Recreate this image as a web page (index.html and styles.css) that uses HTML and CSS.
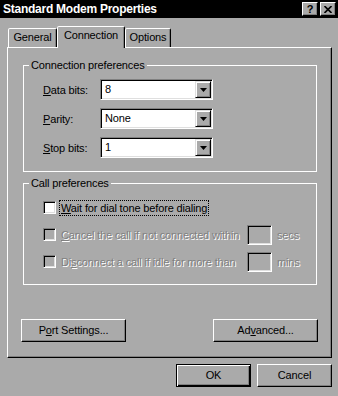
FILE: index.html
```html
<!DOCTYPE html>
<html>
<head>
<meta charset="utf-8">
<title>Standard Modem Properties</title>
<link rel="stylesheet" href="styles.css">
</head>
<body>
<div class="window">
  <div class="titlebar">
    <span class="title">Standard Modem Properties</span>
    <div class="title-buttons">
      <span class="tbtn help">?</span>
      <span class="tbtn close"><svg width="8" height="7" viewBox="0 0 8 7"><path d="M0.5 0 L7.5 7 M7.5 0 L0.5 7" stroke="#000" stroke-width="1.6" fill="none"/></svg></span>
    </div>
  </div>
  <div class="tabs">
    <div class="tab tab-general">General</div>
    <div class="tab tab-connection active">Connection</div>
    <div class="tab tab-options">Options</div>
  </div>
  <div class="panel">
    <fieldset class="group group-conn">
      <legend>Connection preferences</legend>
      <div class="group-body">
        <div class="field-row">
          <span class="field-label"><u>D</u>ata bits:</span>
          <div class="combo"><span class="combo-value">8</span><span class="combo-btn"><svg width="7" height="4" viewBox="0 0 7 4"><path d="M0 0H7L3.5 4Z" fill="#000"/></svg></span></div>
        </div>
        <div class="field-row">
          <span class="field-label"><u>P</u>arity:</span>
          <div class="combo"><span class="combo-value">None</span><span class="combo-btn"><svg width="7" height="4" viewBox="0 0 7 4"><path d="M0 0H7L3.5 4Z" fill="#000"/></svg></span></div>
        </div>
        <div class="field-row">
          <span class="field-label"><u>S</u>top bits:</span>
          <div class="combo"><span class="combo-value">1</span><span class="combo-btn"><svg width="7" height="4" viewBox="0 0 7 4"><path d="M0 0H7L3.5 4Z" fill="#000"/></svg></span></div>
        </div>
      </div>
    </fieldset>
    <fieldset class="group group-call">
      <legend>Call preferences</legend>
      <div class="group-body">
        <div class="check-row">
          <span class="checkbox"></span>
          <span class="check-label focused"><u>W</u>ait for dial tone before dialing</span>
        </div>
        <div class="check-row disabled">
          <span class="checkbox"></span>
          <span class="check-label wide"><u>C</u>ancel the call if not connected within</span>
          <span class="edit"></span>
          <span class="unit">secs</span>
        </div>
        <div class="check-row disabled">
          <span class="checkbox"></span>
          <span class="check-label wide">Di<u>s</u>connect a call if idle for more than</span>
          <span class="edit"></span>
          <span class="unit">mins</span>
        </div>
      </div>
    </fieldset>
    <div class="panel-buttons">
      <button class="btn wide-btn">P<u>o</u>rt Settings...</button>
      <button class="btn wide-btn">Ad<u>v</u>anced...</button>
    </div>
  </div>
  <div class="footer">
    <button class="btn default">OK</button>
    <button class="btn">Cancel</button>
  </div>
</div>
</body>
</html>
```
FILE: styles.css
```css
* { box-sizing: border-box; }
html, body { margin: 0; padding: 0; }
body {
  background: #aaaaaa;
  font-family: "Liberation Sans", Arial, sans-serif;
  font-size: 11px;
  letter-spacing: -0.15px;
  color: #000;
}
.window {
  width: 338px;
  height: 396px;
  background: #aaaaaa;
  display: flex;
  flex-direction: column;
}
.titlebar {
  height: 18px;
  background: #000;
  color: #fff;
  display: flex;
  align-items: flex-start;
  justify-content: space-between;
  padding: 2px 2px 0 3px;
}
.title {
  font-weight: bold;
  font-size: 12px;
  line-height: 14px;
  letter-spacing: -0.25px;
}
.title-buttons { display: flex; gap: 2px; }
.tbtn {
  width: 16px;
  height: 14px;
  background: #aaaaaa;
  border: 1px solid;
  border-color: #fff #000 #000 #fff;
  box-shadow: inset -1px -1px #808080;
  display: flex;
  align-items: center;
  justify-content: center;
  color: #000;
  font-weight: bold;
  font-size: 11px;
  line-height: 12px;
}
.close svg { display: block; }

.tabs {
  display: flex;
  align-items: flex-end;
  height: 21px;
  margin-top: 8px;
  padding-left: 8px;
  position: relative;
  z-index: 1;
}
.tab {
  height: 19px;
  border: 1px solid;
  border-bottom: none;
  border-color: #fff #000 transparent #fff;
  border-radius: 2px 2px 0 0;
  box-shadow: inset -1px 0 #808080;
  padding-top: 2px;
  text-align: center;
  line-height: 13px;
  background: #aaaaaa;
}
.tab-general { width: 49px; }
.tab-connection { width: 68px; }
.tab-options { width: 46px; }
.tab.active {
  height: 22px;
  margin-bottom: -1px;
}

.panel {
  margin-left: 7px;
  width: 325px;
  height: 311px;
  border: 1px solid;
  border-color: #fff #000 #000 #fff;
  box-shadow: inset -1px -1px #808080;
  padding: 11px 14px 0 15px;
}
.group {
  margin: 0;
  min-width: 0;
  border: 1px solid #fff;
  padding: 7px 0 13px 0;
}
.group legend {
  margin-left: 5px;
  padding: 0 2px;
  line-height: 13px;
}
.group-body { padding-left: 19px; }
.group-call { margin-top: 5px; padding-bottom: 12px; }

.field-row {
  display: flex;
  align-items: center;
  height: 21px;
  margin-bottom: 8px;
}
.field-row:last-child { margin-bottom: 0; }
.field-label { width: 57px; }
.combo {
  width: 113px;
  height: 21px;
  border: 1px solid;
  border-color: #808080 #fff #fff #808080;
  box-shadow: inset 1px 1px #000, inset -1px -1px #dfdfdf;
  background: #fff;
  padding: 1px;
  display: flex;
}
.combo-value {
  flex: 1;
  padding-left: 3px;
  line-height: 17px;
}
.combo-btn {
  width: 16px;
  height: 17px;
  background: #aaaaaa;
  border: 1px solid;
  border-color: #dfdfdf #000 #000 #dfdfdf;
  box-shadow: inset 1px 1px #fff, inset -1px -1px #808080;
  display: flex;
  align-items: center;
  justify-content: center;
}
.combo-btn svg { display: block; }

.check-row {
  display: flex;
  align-items: center;
  height: 21px;
  margin-bottom: 6px;
}
.check-row:last-child { margin-bottom: 0; }
.checkbox {
  width: 13px;
  height: 13px;
  flex: none;
  border: 1px solid;
  border-color: #808080 #fff #fff #808080;
  box-shadow: inset 1px 1px #000, inset -1px -1px #dfdfdf;
  background: #fff;
}
.check-label {
  margin-left: 3px;
  padding: 0 1px;
  border: 1px solid transparent;
  line-height: 14px;
  white-space: nowrap;
}
.check-label.focused { border: 1px dotted #000; }
.check-label.wide { width: 188px; }
.disabled .checkbox { background: #aaaaaa; }
.disabled .check-label,
.disabled .unit {
  color: #808080;
  text-shadow: 1px 1px 0 #fff;
}
.edit {
  width: 25px;
  height: 20px;
  flex: none;
  border: 1px solid;
  border-color: #808080 #fff #fff #808080;
  box-shadow: inset 1px 1px #000, inset -1px -1px #dfdfdf;
  background: #aaaaaa;
}
.unit { margin-left: 5px; }

.btn {
  font-family: "Liberation Sans", Arial, sans-serif;
  font-size: 11px;
  letter-spacing: -0.15px;
  color: #000;
  background: #aaaaaa;
  height: 23px;
  width: 75px;
  padding: 0;
  border: 1px solid;
  border-color: #fff #000 #000 #fff;
  box-shadow: inset -1px -1px #808080;
  line-height: 13px;
}
.btn.default {
  border-color: #000;
  box-shadow: inset 1px 1px #fff, inset -1px -1px #000, inset -2px -2px #808080;
}
.panel-buttons {
  display: flex;
  justify-content: space-between;
  margin: 34px -1px 0 -2px;
}
.wide-btn { width: 105px; }
.footer {
  display: flex;
  justify-content: flex-end;
  gap: 6px;
  margin-top: 6px;
  padding-right: 6px;
}
```
